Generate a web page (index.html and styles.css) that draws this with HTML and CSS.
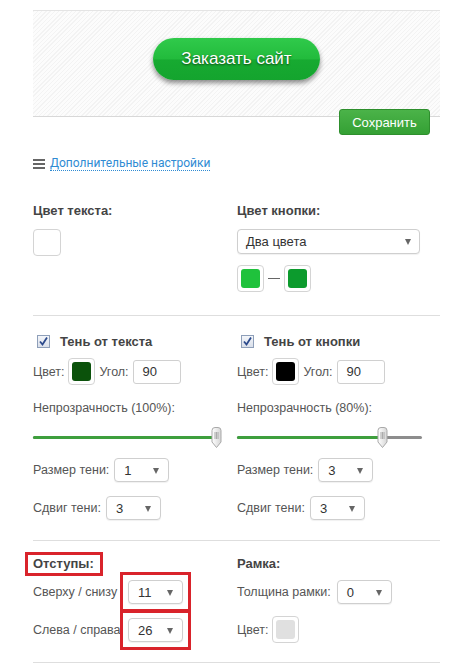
FILE: index.html
```html
<!DOCTYPE html>
<html lang="ru">
<head>
    <meta charset="UTF-8">
    <meta name="viewport" content="width=device-width, initial-scale=1.0">
    <title>Настройки кнопки</title>
    <link rel="stylesheet" href="styles.css">
</head>
<body>
    <div class="page">
        <div class="preview">
            <button class="order-btn">Заказать сайт</button>
        </div>
        <div class="save-row">
            <button class="save-btn">Сохранить</button>
        </div>
        <div class="more">
            <span class="burger"><i></i><i></i><i></i></span>
            <a href="#" class="more-link">Дополнительные настройки</a>
        </div>

        <section class="group group-colors">
            <div class="col">
                <div class="heading">Цвет текста:</div>
                <span class="swatch swatch-empty"></span>
            </div>
            <div class="col">
                <div class="heading">Цвет кнопки:</div>
                <div class="select select-wide"><span>Два цвета</span><b class="arrow"></b></div>
                <div class="pair">
                    <span class="swatch"><i class="c-light"></i></span>
                    <span class="dash"></span>
                    <span class="swatch"><i class="c-dark"></i></span>
                </div>
            </div>
        </section>

        <section class="group group-shadow">
            <div class="col">
                <label class="check-row"><span class="check"><svg viewBox="0 0 11 11" width="11" height="11"><path d="M2 5.5 L4.5 8.5 L9 1.5" fill="none" stroke="#2c4a8c" stroke-width="1.8"/></svg></span>Тень от текста</label>
                <div class="row color-row">
                    <span>Цвет:</span>
                    <span class="swatch"><i class="c-forest"></i></span>
                    <span>Угол:</span>
                    <span class="num">90</span>
                </div>
                <div class="caption">Непрозрачность (100%):</div>
                <div class="slider slider-left">
                    <span class="track"></span>
                    <span class="track-fill" style="width: 184px"></span>
                    <svg class="handle" style="left: 178px" viewBox="0 0 11 21" width="11" height="21">
                        <defs><linearGradient id="hg1" x1="0" y1="0" x2="1" y2="0"><stop offset="0" stop-color="#ffffff"/><stop offset="1" stop-color="#d6d6d6"/></linearGradient></defs>
                        <path d="M1 3.5 Q1 0.5 4 0.5 H7 Q10 0.5 10 3.5 V15 L5.5 20.5 L1 15 Z" fill="url(#hg1)" stroke="#a9a9a9"/>
                        <path d="M4 5 V12 M5.5 5 V12 M7 5 V12" stroke="#9a9a9a" stroke-width="0.8"/>
                    </svg>
                </div>
                <div class="row">
                    <span>Размер тени:</span>
                    <div class="select"><span>1</span><b class="arrow"></b></div>
                </div>
                <div class="row row-last">
                    <span>Сдвиг тени:</span>
                    <div class="select"><span>3</span><b class="arrow"></b></div>
                </div>
            </div>
            <div class="col">
                <label class="check-row"><span class="check"><svg viewBox="0 0 11 11" width="11" height="11"><path d="M2 5.5 L4.5 8.5 L9 1.5" fill="none" stroke="#2c4a8c" stroke-width="1.8"/></svg></span>Тень от кнопки</label>
                <div class="row color-row">
                    <span>Цвет:</span>
                    <span class="swatch"><i class="c-black"></i></span>
                    <span>Угол:</span>
                    <span class="num">90</span>
                </div>
                <div class="caption">Непрозрачность (80%):</div>
                <div class="slider slider-right">
                    <span class="track"></span>
                    <span class="track-fill" style="width: 146px"></span>
                    <svg class="handle" style="left: 140px" viewBox="0 0 11 21" width="11" height="21">
                        <defs><linearGradient id="hg2" x1="0" y1="0" x2="1" y2="0"><stop offset="0" stop-color="#ffffff"/><stop offset="1" stop-color="#d6d6d6"/></linearGradient></defs>
                        <path d="M1 3.5 Q1 0.5 4 0.5 H7 Q10 0.5 10 3.5 V15 L5.5 20.5 L1 15 Z" fill="url(#hg2)" stroke="#a9a9a9"/>
                        <path d="M4 5 V12 M5.5 5 V12 M7 5 V12" stroke="#9a9a9a" stroke-width="0.8"/>
                    </svg>
                </div>
                <div class="row">
                    <span>Размер тени:</span>
                    <div class="select"><span>3</span><b class="arrow"></b></div>
                </div>
                <div class="row row-last">
                    <span>Сдвиг тени:</span>
                    <div class="select"><span>3</span><b class="arrow"></b></div>
                </div>
            </div>
        </section>

        <section class="group group-spacing">
            <div class="col">
                <div class="heading"><span class="mark-label">Отступы:</span></div>
                <div class="row row-pad">
                    <span class="pad-label">Сверху / снизу</span>
                    <span class="mark-box"><span class="select"><span>11</span><b class="arrow"></b></span></span>
                </div>
                <div class="row row-pad row-second">
                    <span class="pad-label">Слева / справа</span>
                    <span class="mark-box"><span class="select"><span>26</span><b class="arrow"></b></span></span>
                </div>
            </div>
            <div class="col">
                <div class="heading">Рамка:</div>
                <div class="row row-pad">
                    <span>Толщина рамки:</span>
                    <div class="select"><span>0</span><b class="arrow"></b></div>
                </div>
                <div class="row row-frame">
                    <span>Цвет:</span>
                    <span class="swatch"><i class="c-grey"></i></span>
                </div>
            </div>
        </section>
    </div>
</body>
</html>
```

FILE: styles.css
```css
body {
    margin: 0;
    font-family: "Liberation Sans", Arial, sans-serif;
    font-size: 12.5px;
    color: #555;
    background: #fff;
}

.page {
    width: 407px;
    padding: 0 10px 0 33px;
}

/* preview */

.preview {
    margin-top: 10px;
    height: 78px;
    padding-top: 27px;
    border-top: 1px solid #e4e4e4;
    border-bottom: 1px solid #d8d8d8;
    background: repeating-linear-gradient(135deg, #f3f3f3 0, #f3f3f3 1px, #fcfcfc 1px, #fcfcfc 3px);
    display: flex;
    justify-content: center;
    align-items: flex-start;
}

.order-btn {
    width: 167px;
    height: 42px;
    border: none;
    border-radius: 21px;
    background: linear-gradient(to bottom, #30ca4b 0%, #22bb3c 50%, #17aa31 52%, #14a42e 100%);
    box-shadow: 0 3px 5px rgba(0, 0, 0, 0.45);
    color: #fff;
    font-family: "Liberation Sans", Arial, sans-serif;
    font-size: 17px;
    text-shadow: 0 1px 2px #0b4a12;
    cursor: pointer;
}

.save-row {
    display: flex;
    justify-content: flex-end;
    padding-right: 10px;
    margin-top: -8px;
}

.save-btn {
    width: 91px;
    height: 26px;
    border: 1px solid #2e8f2d;
    border-radius: 3px;
    background: linear-gradient(to bottom, #4bb349, #34a034);
    color: #fff;
    font-family: "Liberation Sans", Arial, sans-serif;
    font-size: 13px;
    padding: 0;
    cursor: pointer;
}

.more {
    margin-top: 20px;
    height: 16px;
    display: flex;
    align-items: center;
    gap: 5px;
}

.burger {
    display: flex;
    flex-direction: column;
    gap: 2px;
    width: 12px;
    margin-top: 1px;
}

.burger i {
    display: block;
    height: 2px;
    background: #666;
}

.more-link {
    font-family: Roboto, "Liberation Sans", sans-serif;
    font-size: 12px;
    color: #2f8bd3;
    text-decoration: none;
    border-bottom: 1px dotted #2f8bd3;
    line-height: 14px;
}

/* groups */

.group {
    display: grid;
    grid-template-columns: 204px 1fr;
    border-bottom: 1px solid #dedede;
}

.heading {
    font-size: 13px;
    font-weight: bold;
    color: #444;
    line-height: 16px;
    height: 16px;
}

.group-colors {
    padding-top: 32px;
    padding-bottom: 23px;
}

.group-colors .heading {
    margin-bottom: 10px;
}

.swatch {
    box-sizing: border-box;
    display: inline-flex;
    width: 27px;
    height: 27px;
    padding: 3px;
    border: 1px solid #d4d4d4;
    border-radius: 4px;
    background: #fff;
}

.swatch i {
    flex: 1;
    border-radius: 3px;
}

.swatch-empty {
    width: 28px;
}

.c-light { background: #1fc23c; }
.c-dark { background: #0c9b2d; }
.c-forest { background: #0b520b; }
.c-black { background: #000; }
.c-grey { background: #e0e0e0; }

.pair {
    display: flex;
    align-items: center;
    gap: 4px;
    margin-top: 11px;
}

.dash {
    width: 12px;
    height: 1px;
    background: #666;
}

.select {
    box-sizing: border-box;
    position: relative;
    width: 55px;
    height: 24px;
    border: 1px solid #cfcfcf;
    border-radius: 4px;
    background: #fff;
    box-shadow: 0 1px 1px rgba(0, 0, 0, 0.06);
    display: flex;
    align-items: center;
    padding-left: 9px;
    color: #333;
    font-size: 13px;
}

.select-wide {
    width: 183px;
    height: 25px;
    padding-left: 8px;
}

.arrow {
    position: absolute;
    right: 9px;
    top: 9px;
    border-top: 6px solid #666;
    border-left: 3.5px solid transparent;
    border-right: 3.5px solid transparent;
}

.select-wide .arrow {
    right: 8px;
}

/* shadow group */

.group-shadow {
    padding-top: 18px;
    padding-bottom: 19px;
}

.check-row {
    display: flex;
    align-items: center;
    gap: 10px;
    height: 15px;
    padding-left: 4px;
    font-size: 13px;
    font-weight: bold;
    color: #444;
}

.check {
    box-sizing: border-box;
    width: 13px;
    height: 13px;
    border: 1px solid #8e9fb9;
    background: linear-gradient(to bottom, #f4f6fa, #d9dfea);
    display: flex;
    align-items: center;
    justify-content: center;
}

.row {
    display: flex;
    align-items: center;
    gap: 5px;
}

.color-row {
    gap: 4px;
    height: 27px;
    margin-top: 9px;
}

.num {
    box-sizing: border-box;
    width: 48px;
    height: 24px;
    border: 1px solid #d0d0d0;
    border-radius: 3px;
    padding-left: 9px;
    display: flex;
    align-items: center;
    color: #333;
    font-size: 13px;
}

.caption {
    margin-top: 15px;
    line-height: 16px;
}

.slider {
    position: relative;
    height: 21px;
    margin-top: 11px;
}

.slider-left {
    width: 188px;
}

.slider-right {
    width: 185px;
}

.track,
.track-fill {
    position: absolute;
    left: 0;
    top: 9px;
    height: 3px;
    border-radius: 2px;
}

.track {
    right: 0;
    background: #8d8d8d;
}

.track-fill {
    background: #3e9f3d;
}

.handle {
    position: absolute;
    top: 0;
}

.group-shadow .row:not(.color-row) {
    height: 26px;
    margin-top: 9px;
}

.group-shadow .row-last {
    margin-top: 12px !important;
}

/* spacing group */

.group-spacing {
    padding-top: 15px;
    padding-bottom: 19px;
}

.mark-label {
    display: inline-block;
    padding: 0 5px 0 4px;
    margin-left: -4px;
    outline: 3px solid #d9232b;
    outline-offset: 1px;
}

.row-pad {
    margin-top: 8px;
    height: 24px;
    gap: 6px;
}

.row-second {
    margin-top: 14px;
}

.pad-label {
    width: 89px;
    white-space: nowrap;
}

.mark-box {
    display: block;
    outline: 3px solid #d9232b;
    outline-offset: 5px;
}

.row-frame {
    margin-top: 12px;
    gap: 4px;
}
```
